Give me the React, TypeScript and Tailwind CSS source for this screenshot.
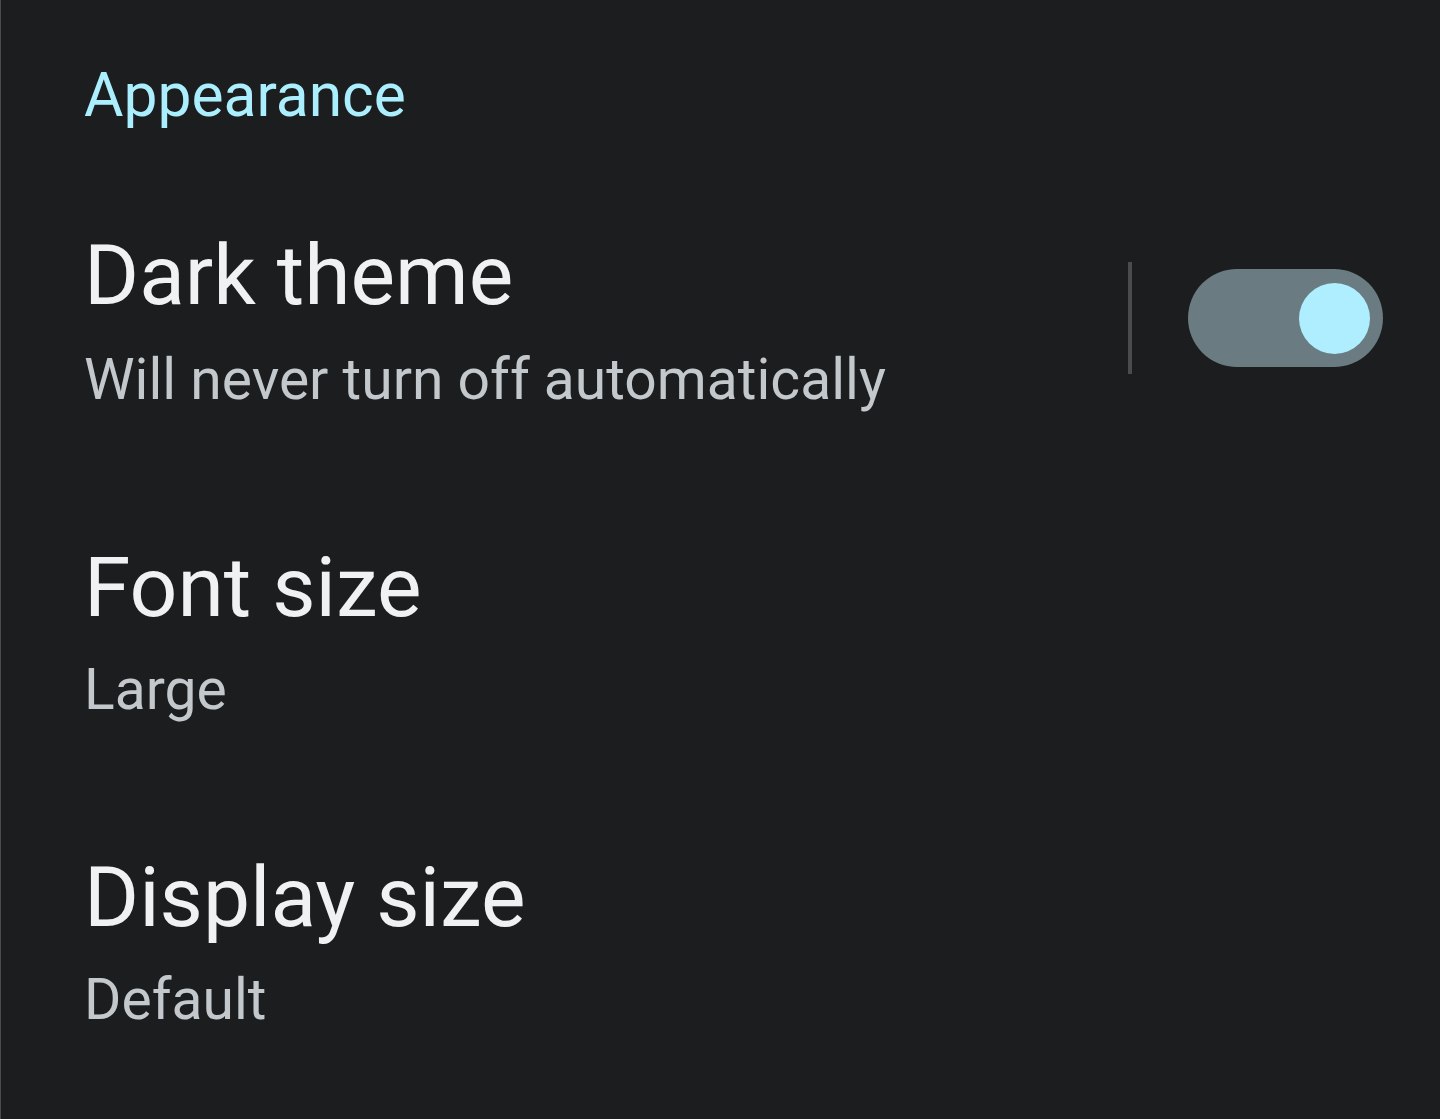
export default function App() {
  const font = { fontFamily: "Roboto, 'Open Sans', sans-serif" };
  return (
    <div className="w-[1440px] h-[1119px] bg-[#1c1d1f] border-l border-[#4a4b4d] overflow-hidden" style={font}>
      <div className="pl-[83px] pt-[60px]">
        <div className="text-[60.5px] leading-[72px] text-[#abeffe]">Appearance</div>
        <div className="mt-[96px] flex items-start pr-[57px]">
          <div className="flex-1">
            <div className="text-[84px] leading-[96px] text-[#f0f1f3]">Dark theme</div>
            <div className="mt-[8px] text-[57px] leading-[96px] text-[#c3c8cc]">Will never turn off automatically</div>
          </div>
          <div className="mt-[34px] w-[4px] h-[112px] bg-[#4a4b4d] mr-[56px]" />
          <div className="mt-[41px] w-[195px] h-[98px] rounded-full bg-[#6a7b82] flex items-center justify-end pr-[13px]">
            <div className="w-[71px] h-[71px] rounded-full bg-[#aeeefe]" />
          </div>
        </div>
        <div className="mt-[112px]">
          <div className="text-[84px] leading-[96px] text-[#f0f1f3]">Font size</div>
          <div className="mt-[6px] text-[57px] leading-[96px] text-[#c3c8cc]">Large</div>
        </div>
        <div className="mt-[112px]">
          <div className="text-[84px] leading-[96px] text-[#f0f1f3]">Display size</div>
          <div className="mt-[6px] text-[57px] leading-[96px] text-[#c3c8cc]">Default</div>
        </div>
      </div>
    </div>
  );
}
